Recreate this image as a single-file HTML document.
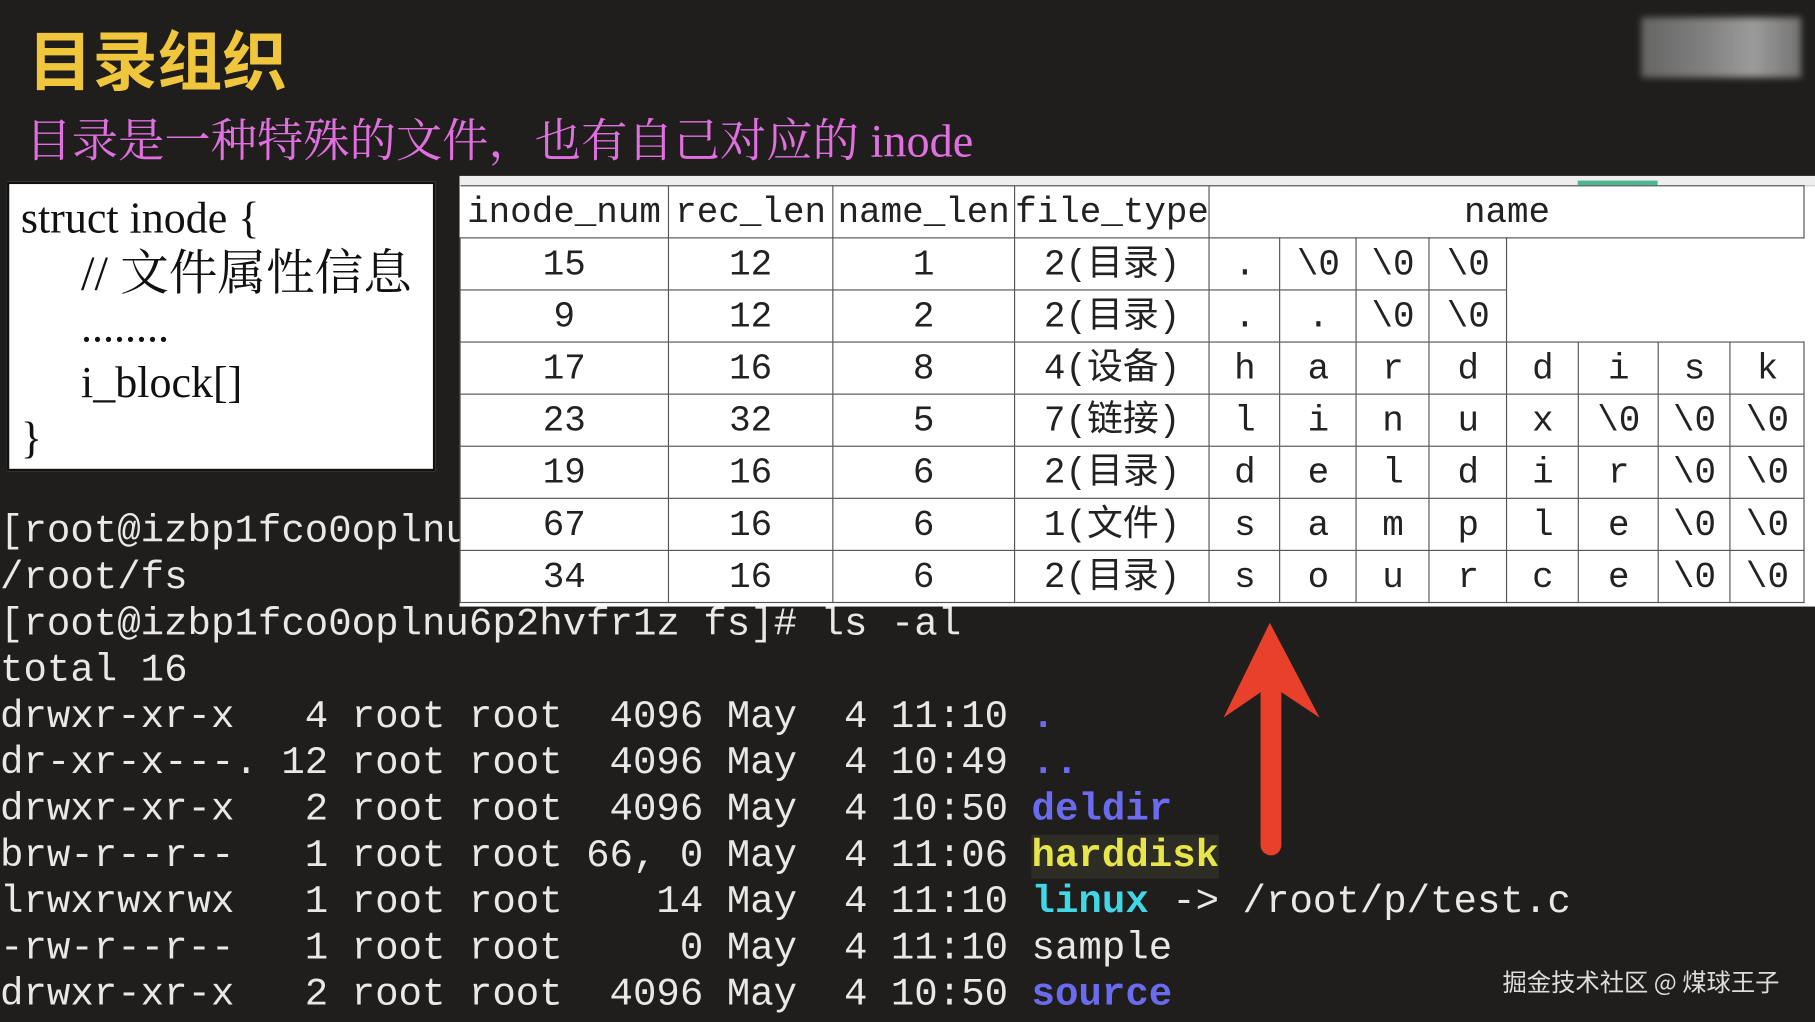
<!DOCTYPE html>
<html><head><meta charset="utf-8"><style>
html,body{margin:0;padding:0;background:#201e1c;width:1815px;height:1022px;overflow:hidden}
#w{position:absolute;left:0;top:0;width:1568px;height:883px;transform:scale(1.15753);transform-origin:0 0;background:#201e1c;overflow:hidden}
.abs{position:absolute}
.title{left:24px;top:14px;font:bold 56px "Noto Sans CJK SC",sans-serif;color:#f0c63c;line-height:72px}
.sub{left:22px;top:96px;font:40px "Liberation Serif","Noto Serif CJK SC",serif;color:#e070e0;line-height:52px;white-space:nowrap}
.blur{left:1418px;top:15px;width:138px;height:52px;background:linear-gradient(90deg,#777,#999 40%,#bbb 70%,#888);filter:blur(3px);opacity:.8}
.box{left:6px;top:157px;width:370px;height:250px;background:#fff;border:2px solid #111;box-sizing:border-box;font:38px "Liberation Serif","Noto Serif CJK SC",serif;color:#111}
.box div{position:absolute;white-space:pre;line-height:44px}
.term{left:0;top:440px;font:33.75px/40px "Liberation Mono","DejaVu Sans Mono",monospace;color:#e8e8e8;white-space:pre}
.b{color:#6b6bf0;font-weight:bold}.y{color:#e6e64a;font-weight:bold;background:#2e2d25}.c{color:#40d8e6;font-weight:bold}
.tblbg{left:397px;top:152px;width:1171px;height:372px;background:#fff}
.strip{left:397px;top:152px;width:1171px;height:8px;background:#eee;border-bottom:1px solid #ccc}
table{position:absolute;left:397px;top:160px;border-collapse:collapse;table-layout:fixed;font:31px/40px "Liberation Mono","Noto Sans CJK SC",monospace;color:#222}
td{border:1px solid #555;text-align:center;padding:4px 0 0 0;height:44px;line-height:40px;overflow:hidden;white-space:nowrap;box-sizing:border-box}
td.n{border:none}
.wm{left:1298px;top:833px;font:21px "Noto Sans CJK SC",sans-serif;color:#ddd}
</style></head><body><div id="w">
<div class="abs title">目录组织</div>
<div class="abs sub">目录是一种特殊的文件，也有自己对应的 inode</div>
<div class="abs blur"></div>
<div class="abs term">[root@izbp1fco0oplnu6p2hvfr1z fs]# pwd
/root/fs
[root@izbp1fco0oplnu6p2hvfr1z fs]# ls -al
total 16
drwxr-xr-x   4 root root  4096 May  4 11:10 <span class="b">.</span>
dr-xr-x---. 12 root root  4096 May  4 10:49 <span class="b">..</span>
drwxr-xr-x   2 root root  4096 May  4 10:50 <span class="b">deldir</span>
brw-r--r--   1 root root 66, 0 May  4 11:06 <span class="y">harddisk</span>
lrwxrwxrwx   1 root root    14 May  4 11:10 <span class="c">linux</span> -&gt; /root/p/test.c
-rw-r--r--   1 root root     0 May  4 11:10 sample
drwxr-xr-x   2 root root  4096 May  4 10:50 <span class="b">source</span></div>
<div class="abs box">
<div style="left:10px;top:8px">struct inode {</div>
<div style="left:62px;top:56px;font-size:42px">// 文件属性信息</div>
<div style="left:62px;top:102px">........</div>
<div style="left:62px;top:150px">i_block[]</div>
<div style="left:10px;top:198px">}</div>
</div>
<div class="abs tblbg"></div>
<div class="abs strip"><div class="abs" style="left:966px;top:4px;width:69px;height:4px;background:#4cb890"></div></div>
<table>
<colgroup><col style="width:180px"><col style="width:142px"><col style="width:157px"><col style="width:168px"><col style="width:61px"><col style="width:66px"><col style="width:63px"><col style="width:67px"><col style="width:62px"><col style="width:69px"><col style="width:62px"><col style="width:64px"></colgroup>
<tr><td style="border-left:none">inode_num</td><td>rec_len</td><td>name_len</td><td>file_type</td><td colspan="8">name</td></tr>
<tr><td>15</td><td>12</td><td>1</td><td>2(目录)</td><td>.</td><td>\0</td><td>\0</td><td>\0</td><td class="n" colspan="4" rowspan="2"></td></tr>
<tr><td>9</td><td>12</td><td>2</td><td>2(目录)</td><td>.</td><td>.</td><td>\0</td><td>\0</td></tr>
<tr><td>17</td><td>16</td><td>8</td><td>4(设备)</td><td>h</td><td>a</td><td>r</td><td>d</td><td>d</td><td>i</td><td>s</td><td>k</td></tr>
<tr><td>23</td><td>32</td><td>5</td><td>7(链接)</td><td>l</td><td>i</td><td>n</td><td>u</td><td>x</td><td>\0</td><td>\0</td><td>\0</td></tr>
<tr><td>19</td><td>16</td><td>6</td><td>2(目录)</td><td>d</td><td>e</td><td>l</td><td>d</td><td>i</td><td>r</td><td>\0</td><td>\0</td></tr>
<tr><td>67</td><td>16</td><td>6</td><td>1(文件)</td><td>s</td><td>a</td><td>m</td><td>p</td><td>l</td><td>e</td><td>\0</td><td>\0</td></tr>
<tr><td>34</td><td>16</td><td>6</td><td>2(目录)</td><td>s</td><td>o</td><td>u</td><td>r</td><td>c</td><td>e</td><td>\0</td><td>\0</td></tr>
</table>
<svg class="abs" style="left:0;top:0" width="1568" height="883">
<line x1="1098" y1="600" x2="1098" y2="730" stroke="#e8402a" stroke-width="18" stroke-linecap="round"/>
<path d="M1097 538 L1140 620 L1098 592 L1057 620 Z" fill="#e8402a"/>
</svg>
<div class="abs wm">掘金技术社区 @ 煤球王子</div>
</div></body></html>
